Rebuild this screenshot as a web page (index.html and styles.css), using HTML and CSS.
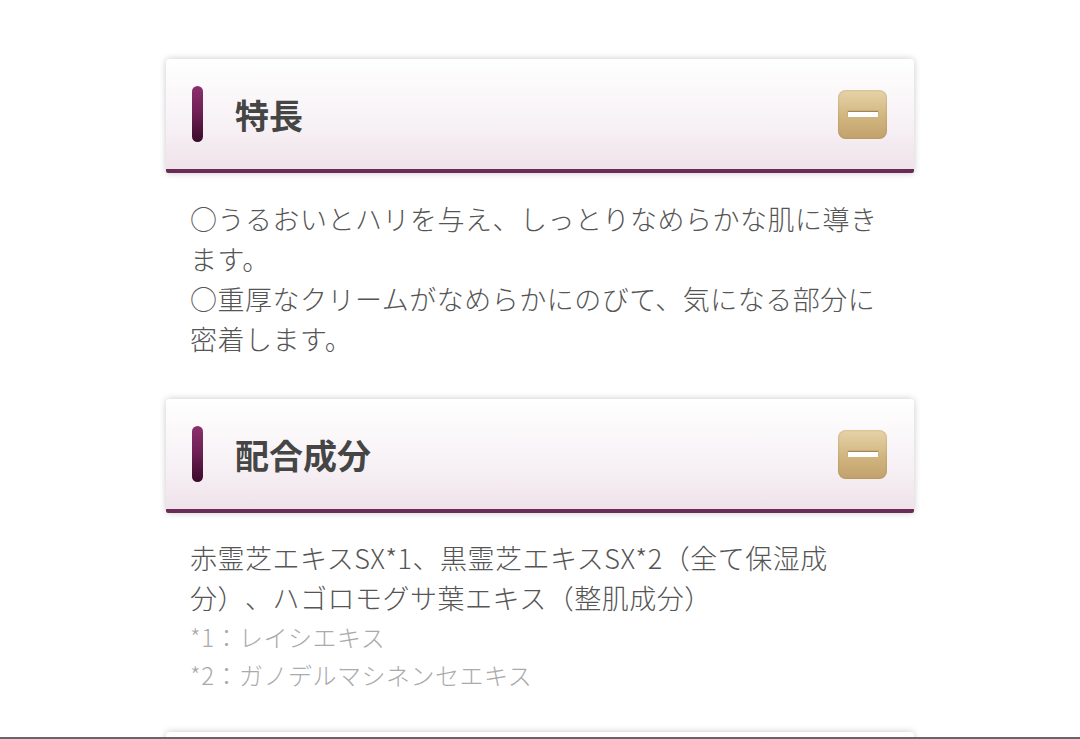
FILE: index.html
```html
<!DOCTYPE html>
<html lang="ja">
<head>
    <meta charset="UTF-8">
    <title>特長・配合成分</title>
    <link rel="stylesheet" href="styles.css">
</head>
<body>
<div class="page">
  <section class="item">
    <div class="item-head">
      <span class="bar"></span>
      <h2>特長</h2>
      <span class="toggle"><span class="minus"></span></span>
    </div>
    <div class="item-body">
      <p>○うるおいとハリを与え、しっとりなめらかな肌に導きます。</p>
      <p>○重厚なクリームがなめらかにのびて、気になる部分に密着します。</p>
    </div>
  </section>
  <section class="item">
    <div class="item-head">
      <span class="bar"></span>
      <h2>配合成分</h2>
      <span class="toggle"><span class="minus"></span></span>
    </div>
    <div class="item-body second">
      <p>赤霊芝エキスSX*1、黒霊芝エキスSX*2（全て保湿成分）、ハゴロモグサ葉エキス（整肌成分）</p>
      <p class="note">*1：レイシエキス</p>
      <p class="note">*2：ガノデルマシネンセエキス</p>
    </div>
  </section>
  <section class="item">
    <div class="item-head">
      <span class="bar"></span>
      <span class="spacer"></span>
      <span class="toggle"><span class="minus"></span></span>
    </div>
  </section>
</div>
<div class="edge"></div>
</body>
</html>
```

FILE: styles.css
```css
body {
    margin: 0;
    padding: 0;
    background: #fff;
    font-family: "Noto Sans CJK JP", "Noto Sans", sans-serif;
    color: #555;
    overflow: hidden;
}
.page {
    width: 748px;
    margin: 0 auto;
    padding-top: 59px;
}
.item-head {
    display: flex;
    align-items: center;
    height: 110px;
    padding: 0 27px 0 26px;
    border-bottom: 4px solid #6b2b57;
    border-radius: 4px 4px 2px 2px;
    background: linear-gradient(to bottom, #ffffff, #f7f1f5 60%, #efe3ea);
    box-shadow: 0 0 7px rgba(0, 0, 0, 0.22);
}
.bar {
    width: 11px;
    height: 56px;
    border-radius: 6px;
    background: linear-gradient(to bottom, #8c2f6e, #6c1f52 50%, #3a0b2a);
}
.item-head h2,
.spacer {
    flex: 1;
    margin: 0 0 0 32px;
    font-size: 34px;
    font-weight: bold;
    color: #454545;
}
.toggle {
    width: 49px;
    height: 49px;
    border-radius: 8px;
    background: linear-gradient(to bottom, #e6d3a8, #cfb27c 60%, #c2a26c);
    box-shadow: inset 0 0 2px rgba(120, 90, 40, 0.4);
    display: flex;
    align-items: center;
    justify-content: center;
}
.minus {
    width: 30px;
    height: 5px;
    background: #fff;
    box-shadow: 0 -1px 1px rgba(110, 80, 30, 0.5);
}
.item-body {
    width: 700px;
    padding: 26px 24px 40px;
    font-size: 27px;
    font-weight: 300;
    letter-spacing: 0.5px;
    line-height: 40px;
    text-spacing-trim: space-all;
}
.item-body p {
    margin: 0;
}
.item-body.second {
    width: 670px;
    padding: 25px 24px 38px;
}
.item-body .note {
    font-size: 24px;
    line-height: 38px;
    color: #aaa;
}
.edge {
    position: fixed;
    left: 0;
    right: 0;
    bottom: 0;
    height: 2px;
    background: #666;
}
```
